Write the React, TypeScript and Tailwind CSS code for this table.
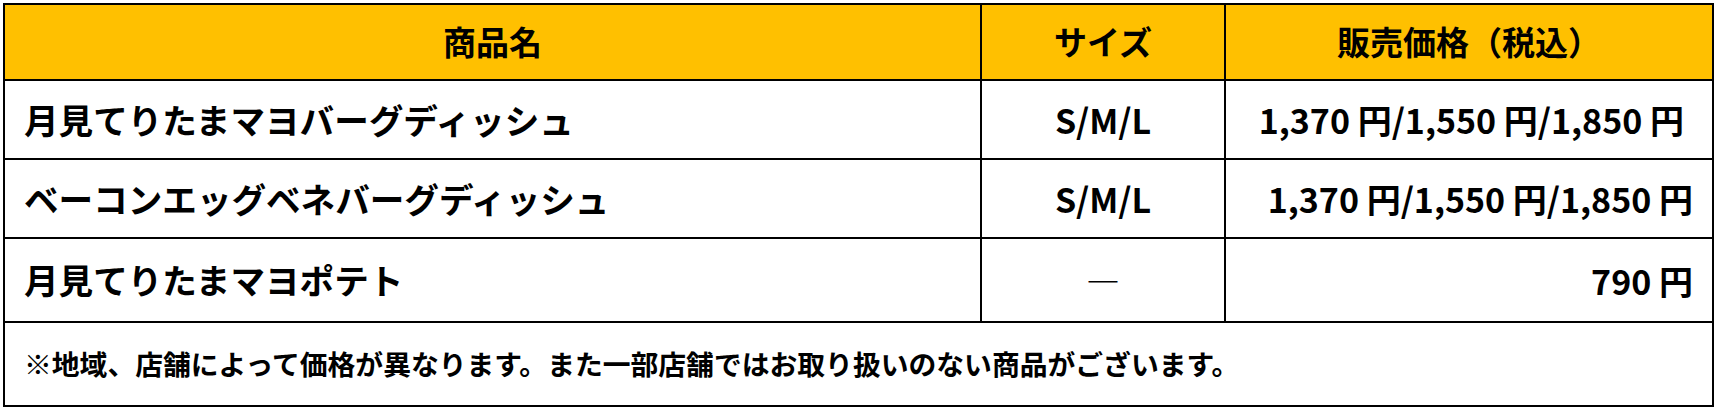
const rows = [
  {
    name: "月見てりたまマヨバーグディッシュ",
    size: "S/M/L",
    price: "1,370 円/1,550 円/1,850 円",
    height: "h-[79px]",
    pricePad: "pr-[28px]",
  },
  {
    name: "ベーコンエッグベネバーグディッシュ",
    size: "S/M/L",
    price: "1,370 円/1,550 円/1,850 円",
    height: "h-[79px]",
    pricePad: "pr-[19px]",
  },
  {
    name: "月見てりたまマヨポテト",
    size: "―",
    price: "790 円",
    height: "h-[84px]",
    pricePad: "pr-[19px]",
  },
];

const App = () => {
  return (
    <div className="w-[1720px] h-[412px] bg-white pt-[3px] pl-[3px]">
      <div className="w-[1711px] border-2 border-black font-['Noto_Sans_CJK_JP',sans-serif] font-bold text-black">
        {/* header */}
        <div className="flex h-[76px] bg-[#ffc000] border-b-2 border-black text-[33px]">
          <div className="w-[977px] border-r-2 border-black flex items-center justify-center">
            商品名
          </div>
          <div className="w-[244px] border-r-2 border-black flex items-center justify-center">
            サイズ
          </div>
          <div className="flex-1 flex items-center justify-center">
            販売価格（税込）
          </div>
        </div>

        {rows.map((row, i) => (
          <div
            key={i}
            className={`flex ${row.height} border-b-2 border-black text-[34px]`}
          >
            <div className="w-[977px] border-r-2 border-black flex items-center pl-[19px] text-[34.6px]">
              {row.name}
            </div>
            <div className="w-[244px] border-r-2 border-black flex items-center justify-center">
              {row.size}
            </div>
            <div className={`flex-1 flex items-center justify-end ${row.pricePad}`}>
              {row.price}
            </div>
          </div>
        ))}

        {/* note */}
        <div className="h-[82px] flex items-center pl-[19px] text-[27.8px]">
          ※地域、店舗によって価格が異なります。また一部店舗ではお取り扱いのない商品がございます。
        </div>
      </div>
    </div>
  );
};

export default App;
